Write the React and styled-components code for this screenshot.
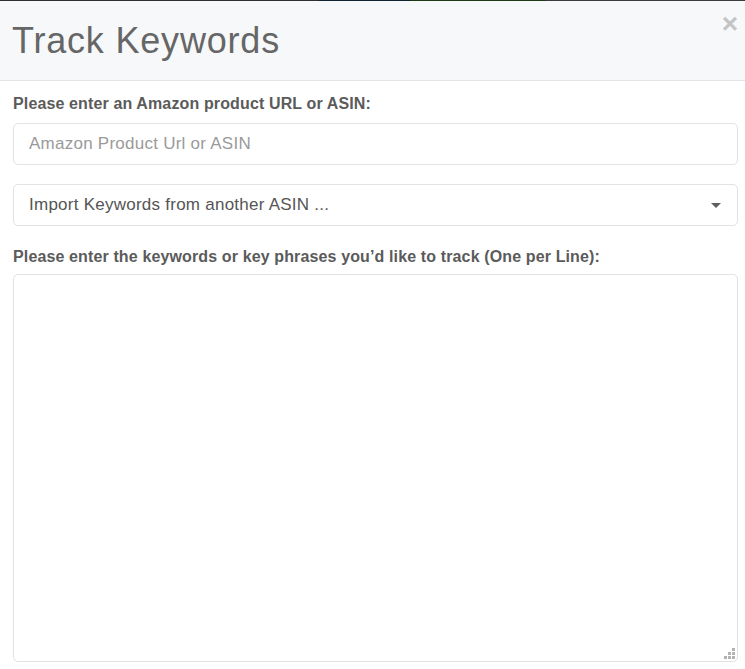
import React from "react";
import styled, { createGlobalStyle } from "styled-components";

const Global = createGlobalStyle`
  * { box-sizing: border-box; }
  html, body { margin: 0; padding: 0; background: #ffffff; }
  body { font-family: "Liberation Sans", Arial, sans-serif; }
`;

const Page = styled.div`
  width: 745px;
  height: 669px;
  display: flex;
  flex-direction: column;
  overflow: hidden;
  background: #ffffff;
`;

/* sliver of the dimmed page behind the dialog */
const Backdrop = styled.div`
  height: 1px;
  flex: none;
  background: linear-gradient(
    to right,
    #2e3032 0px,
    #2e3032 318px,
    #0f2433 319px,
    #0f2433 410px,
    #1d3a10 411px,
    #1d3a10 545px,
    #3a3b3c 546px,
    #3a3b3c 745px
  );
`;

const Header = styled.header`
  position: relative;
  height: 80px;
  flex: none;
  background: #f7f8fa;
  border-bottom: 1px solid #e3e4e6;
  display: flex;
  align-items: center;
  padding: 0 12px 0 12px;
`;

const Title = styled.h1`
  margin: 0;
  font-family: "Liberation Sans", Arial, sans-serif;
  font-weight: 400;
  font-size: 36px;
  line-height: 44px;
  color: #666666;
  letter-spacing: 0.8px;
`;

const Close = styled.button`
  position: absolute;
  top: 9px;
  right: 7px;
  border: 0;
  background: none;
  padding: 0;
  cursor: pointer;
  font-family: "Liberation Sans", Arial, sans-serif;
  font-weight: 700;
  font-size: 28px;
  line-height: 28px;
  color: #c4c4c4;
`;

const Body = styled.div`
  flex: 1;
  display: flex;
  flex-direction: column;
  padding: 13px 7px 0 13px;
`;

const Label = styled.label`
  display: block;
  font-family: "Liberation Sans", Arial, sans-serif;
  font-weight: 700;
  font-size: 16px;
  line-height: 20px;
  letter-spacing: 0.13px;
  color: #5b5b5b;
  margin: ${(p) => p.$top || 0}px 0 ${(p) => p.$bottom || 0}px;
`;

const fieldBase = `
  width: 100%;
  border: 1px solid #e2e2e2;
  border-radius: 5px;
  background: #ffffff;
  font-family: "Liberation Sans", Arial, sans-serif;
  font-size: 17px;
  letter-spacing: 0.25px;
  color: #555555;
  outline: none;
`;

const TextInput = styled.input`
  ${fieldBase}
  height: 42px;
  padding: 0 15px;
  &::placeholder { color: #9a9a9a; }
`;

const SelectBox = styled.div`
  ${fieldBase}
  position: relative;
  height: 42px;
  margin-top: 19px;
  padding: 0 15px;
  display: flex;
  align-items: center;
  justify-content: space-between;
  cursor: pointer;
`;

const SelectText = styled.span`
  color: #555555;
`;

const Caret = styled.span`
  width: 0;
  height: 0;
  border-left: 5px solid transparent;
  border-right: 5px solid transparent;
  border-top: 5px solid #5f5f5f;
  margin-right: 1px;
`;

const AreaWrap = styled.div`
  position: relative;
  height: 388px;
`;

const Area = styled.textarea`
  ${fieldBase}
  display: block;
  height: 100%;
  padding: 10px 15px;
  resize: none;
`;

const Grip = styled.svg`
  position: absolute;
  right: 3px;
  bottom: 3px;
  pointer-events: none;
`;

export default function App() {
  return (
    <>
      <Global />
      <Page>
        <Backdrop />
        <Header>
          <Title>Track Keywords</Title>
          <Close aria-label="Close">×</Close>
        </Header>
        <Body>
          <Label htmlFor="asin" $bottom={9}>
            Please enter an Amazon product URL or ASIN:
          </Label>
          <TextInput id="asin" placeholder="Amazon Product Url or ASIN" />
          <SelectBox>
            <SelectText>Import Keywords from another ASIN ...</SelectText>
            <Caret />
          </SelectBox>
          <Label htmlFor="kw" $top={21} $bottom={7}>
            Please enter the keywords or key phrases you’d like to track (One per Line):
          </Label>
          <AreaWrap>
            <Area id="kw" />
            <Grip width="11" height="11" viewBox="0 0 11 11">
              <g fill="#b3b3b3">
                <rect x="8" y="0" width="3" height="3" />
                <rect x="4" y="4" width="3" height="3" />
                <rect x="8" y="4" width="3" height="3" />
                <rect x="0" y="8" width="3" height="3" />
                <rect x="4" y="8" width="3" height="3" />
                <rect x="8" y="8" width="3" height="3" />
              </g>
            </Grip>
          </AreaWrap>
        </Body>
      </Page>
    </>
  );
}
